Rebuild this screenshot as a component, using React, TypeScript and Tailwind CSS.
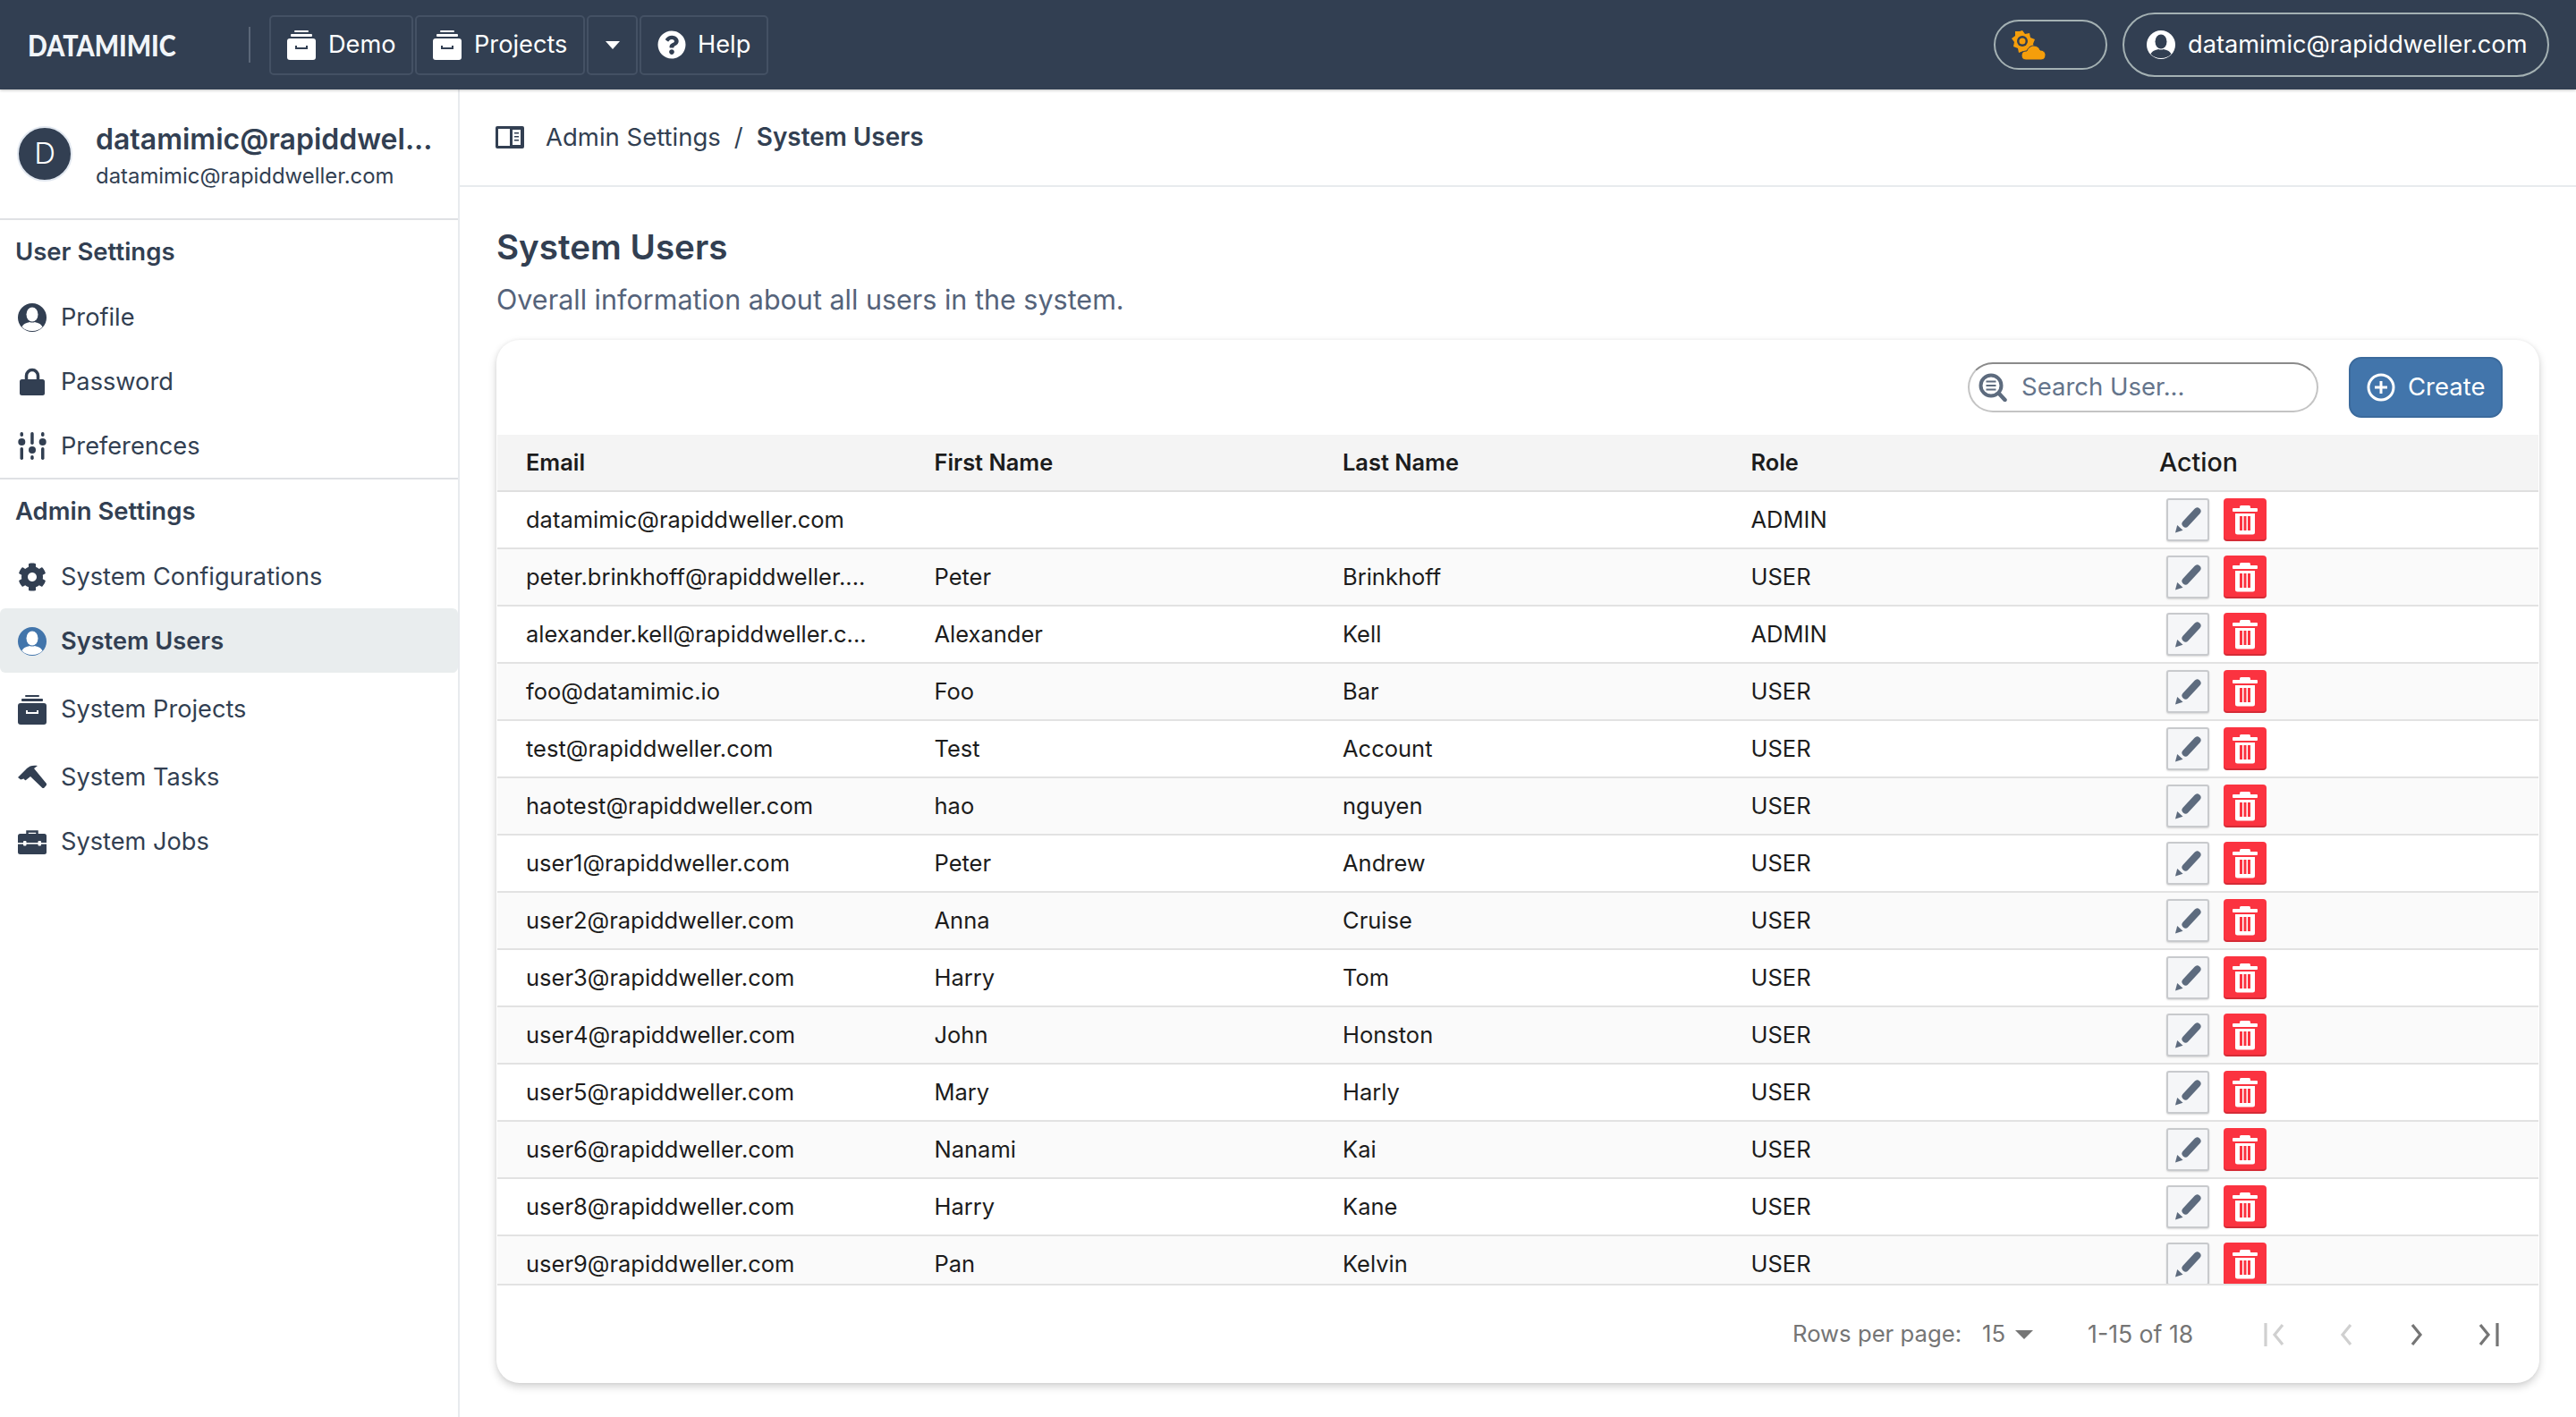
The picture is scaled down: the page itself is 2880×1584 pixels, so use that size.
import { FaCog, FaQuestionCircle } from 'react-icons/fa'

const users = [
  ['datamimic@rapiddweller.com', '', '', 'ADMIN'],
  ['peter.brinkhoff@rapiddweller....', 'Peter', 'Brinkhoff', 'USER'],
  ['alexander.kell@rapiddweller.c...', 'Alexander', 'Kell', 'ADMIN'],
  ['foo@datamimic.io', 'Foo', 'Bar', 'USER'],
  ['test@rapiddweller.com', 'Test', 'Account', 'USER'],
  ['haotest@rapiddweller.com', 'hao', 'nguyen', 'USER'],
  ['user1@rapiddweller.com', 'Peter', 'Andrew', 'USER'],
  ['user2@rapiddweller.com', 'Anna', 'Cruise', 'USER'],
  ['user3@rapiddweller.com', 'Harry', 'Tom', 'USER'],
  ['user4@rapiddweller.com', 'John', 'Honston', 'USER'],
  ['user5@rapiddweller.com', 'Mary', 'Harly', 'USER'],
  ['user6@rapiddweller.com', 'Nanami', 'Kai', 'USER'],
  ['user8@rapiddweller.com', 'Harry', 'Kane', 'USER'],
  ['user9@rapiddweller.com', 'Pan', 'Kelvin', 'USER'],
]

function ArchiveIcon({ cut }: { cut: string }) {
  return (
    <svg viewBox="0 0 32 33" className="w-[32px] h-[33px] shrink-0 fill-current">
      <rect x="8" y="0" width="16" height="2" rx="1" />
      <rect x="4" y="4" width="24" height="3" rx="1" />
      <rect x="0" y="9" width="32" height="24" rx="3" />
      <path d="M10 17v3h12v-3" fill="none" stroke={cut} strokeWidth="2" />
    </svg>
  )
}

function UserIcon({ cut }: { cut: string }) {
  return (
    <svg viewBox="0 0 32 32" className="w-[32px] h-[32px] shrink-0 fill-current">
      <circle cx="16" cy="16" r="16" />
      <ellipse cx="16" cy="12.5" rx="6.5" ry="8" fill={cut} />
      <path d="M4.500 26.500c1-3.500 5.500-4.600 8.500-5.600 1.800.9 4.200.9 6 0 3 1 7.500 2.100 8.500 5.600-2.800 2.900-6.500 4.500-11.500 4.500s-8.700-1.600-11.500-4.500z" fill={cut} />
    </svg>
  )
}

function LockIcon() {
  return (
    <svg viewBox="0 0 32 32" className="w-[32px] h-[32px] shrink-0 fill-current">
      <path d="M9.500 15V9a6.500 6.500 0 0 1 13 0v6" fill="none" stroke="currentColor" strokeWidth="3.500" />
      <rect x="2" y="13" width="28" height="18" rx="2.500" />
    </svg>
  )
}

function SlidersIcon() {
  return (
    <svg viewBox="0 0 32 32" className="w-[32px] h-[32px] shrink-0 fill-current">
      <rect x="2.500" y="0" width="3.500" height="5" rx="1.700" />
      <circle cx="4.300" cy="11" r="4" />
      <rect x="2.500" y="17" width="3.500" height="14" rx="1.700" />
      <rect x="14.200" y="0" width="3.500" height="14" rx="1.700" />
      <circle cx="16" cy="20" r="4" />
      <rect x="14.200" y="26" width="3.500" height="5" rx="1.700" />
      <rect x="26" y="0" width="3.500" height="5" rx="1.700" />
      <circle cx="27.700" cy="11" r="4" />
      <rect x="26" y="17" width="3.500" height="14" rx="1.700" />
    </svg>
  )
}

function HammerIcon() {
  return (
    <svg viewBox="0 0 32 32" className="w-[32px] h-[32px] shrink-0 fill-current">
      <path d="M0 16l10-10c3-3 7-4 12-3l-4 3 14 17c.5.800.2 1.500-.5 2.300l-2 2.200c-.8.800-1.700.8-2.500 0L14 15l-5 4c-.6.300-1 .2-1.400-.2l-1-1.300-3.500 1z" />
    </svg>
  )
}

function BriefcaseIcon() {
  return (
    <svg viewBox="0 0 32 32" className="w-[32px] h-[32px] shrink-0 fill-current">
      <path d="M10.500 8V4.500h11V8" fill="none" stroke="currentColor" strokeWidth="2.500" />
      <rect x="0" y="7" width="32" height="23" rx="2.500" />
      <rect x="0" y="17" width="32" height="1.600" fill="white" />
      <rect x="6" y="15" width="3.500" height="5.500" rx="1" fill="white" />
      <rect x="22.500" y="15" width="3.500" height="5.500" rx="1" fill="white" />
    </svg>
  )
}

function PencilIcon() {
  return (
    <svg viewBox="0 0 48 48" className="w-[48px] h-[48px] shrink-0 fill-[#5d6b7e]">
      <path d="M21.500 28.500L34.500 14.500" stroke="#5d6b7e" strokeWidth="8" strokeLinecap="round" fill="none" />
      <path d="M10 38.500l2.200-8.500 6.300 5.700z" />
    </svg>
  )
}

function TrashIcon() {
  return (
    <svg viewBox="0 0 48 48" className="w-[48px] h-[48px] fill-white">
      <rect x="18" y="8" width="12" height="4" rx="1.500" />
      <rect x="10" y="11" width="28" height="4" rx="1" />
      <path fillRule="evenodd" d="M13 17h22v21a2.500 2.500 0 0 1-2.500 2.500h-17A2.500 2.500 0 0 1 13 38zm5 3v16h3V20zm4.500 0v16h3V20zm4.500 0v16h3V20z" />
    </svg>
  )
}

function WeatherIcon() {
  return (
    <svg viewBox="0 0 40 33" className="w-[40px] h-[33px] fill-[#f59e0b]">
      <path d="M14 0l3 4 5-1 1 5 5 2-2 5 1 3-6 4-3 4-3-3-5 2-1-5-5-2 1-5-3-4 4-3 0-5 5 0z" />
      <circle cx="14" cy="12" r="6" fill="#323f52" />
      <circle cx="14" cy="12" r="3.500" />
      <path d="M18 33c-3 0-5-2-5-5s2-5 5-5h1c1-3 4-6 8-6 3 0 6 2 7 5 3 0 6 2 6 5.500S38 33 35 33z" stroke="#323f52" strokeWidth="1" />
    </svg>
  )
}

function SidebarIcon() {
  return (
    <svg viewBox="0 0 32 25" className="w-[32px] h-[25px] fill-[#323f52]">
      <rect width="32" height="25" rx="2" />
      <rect x="3" y="3" width="13" height="19" fill="white" />
      <rect x="19" y="4" width="9" height="17" fill="white" />
      <rect x="21" y="7" width="5" height="1.500" />
      <rect x="21" y="11" width="5" height="1.500" />
      <rect x="21" y="15" width="5" height="1.500" />
    </svg>
  )
}

function SearchIcon() {
  return (
    <svg viewBox="0 0 32 32" className="w-[32px] h-[32px]" fill="none" stroke="#5d6b7e">
      <circle cx="14" cy="14" r="11.500" strokeWidth="4" />
      <path d="M8.500 9.500h11M8.500 14h11M8.500 18.500h11" strokeWidth="2.200" />
      <path d="M23 23l6.500 7" strokeWidth="4.500" strokeLinecap="round" />
    </svg>
  )
}

function Chevrons({ kind, color }: { kind: string; color: string }) {
  return (
    <svg viewBox="0 0 26 26" className="w-[26px] h-[26px]" fill="none" stroke={color} strokeWidth="3.200">
      {kind === 'first' && <path d="M2 0v26M21 2l-9 11 9 11" />}
      {kind === 'prev' && <path d="M18 2L9 13l9 11" />}
      {kind === 'next' && <path d="M8 2l9 11-9 11" />}
      {kind === 'last' && <path d="M24 0v26M5 2l9 11-9 11" />}
    </svg>
  )
}

function TopButton({ className, children }: { className: string; children: React.ReactNode }) {
  return (
    <div className={`h-[67px] flex items-center border-2 border-[#445164] rounded-[5px] text-[27.2px] text-white ${className}`}>
      {children}
    </div>
  )
}

function NavItem({ icon, label, className = '' }: { icon: React.ReactNode; label: string; className?: string }) {
  return (
    <div className={`h-[72px] flex items-center gap-[16px] pl-[20px] pt-[2px] text-[27.2px] ${className}`}>
      {icon}
      <span>{label}</span>
    </div>
  )
}

export default function App() {
  return (
    <div className="h-screen w-full flex flex-col overflow-hidden bg-white font-[Inter,sans-serif] text-[#323f52]">
      {/* Top bar */}
      <header className="h-[100px] shrink-0 bg-[#323f52] flex items-center pl-[31px] pr-[30px] shadow-[0_1px_3px_rgba(0,0,0,0.25)] z-10">
        <div className="w-[247px] shrink-0 font-[Lato,sans-serif] font-black text-[33px] text-[#f1f5f9] origin-left scale-x-[0.87] leading-none">DATAMIMIC</div>
        <div className="w-[2px] h-[40px] bg-[#5b6778] mr-[21px]" />
        <div className="flex gap-[2px]">
          <TopButton className="w-[161px] pl-[18px] gap-[14px]"><ArchiveIcon cut="#323f52" />Demo</TopButton>
          <TopButton className="w-[190px] pl-[18px] gap-[14px]"><ArchiveIcon cut="#323f52" />Projects</TopButton>
          <TopButton className="w-[57px] justify-center">
            <div className="w-0 h-0 border-x-[8px] border-x-transparent border-t-[9px] border-t-white" />
          </TopButton>
          <TopButton className="w-[144px] pl-[18px] gap-[13px]"><FaQuestionCircle className="w-[32px] h-[32px]" />Help</TopButton>
        </div>
        <div className="ml-auto flex items-center gap-[17px]">
          <div className="w-[127px] h-[56px] border-2 border-[#a4b1b3] rounded-full flex items-center pl-[16px]">
            <WeatherIcon />
          </div>
          <div className="w-[477px] h-[72px] border-2 border-[#a4b1b3] rounded-full flex items-center pl-[25px] gap-[14px] text-[27.2px] text-white">
            <UserIcon cut="#323f52" />
            datamimic@rapiddweller.com
          </div>
        </div>
      </header>

      <div className="flex flex-1 min-h-0">
        {/* Sidebar */}
        <aside className="w-[514px] shrink-0 border-r-2 border-[#e8ebee] flex flex-col">
          <div className="h-[146px] shrink-0 border-b-2 border-[#dfe1e4] flex items-center pl-[19px] gap-[26px]">
            <div className="w-[62px] h-[62px] rounded-full bg-[#323f52] border-2 border-[#e2e8f0] flex items-center justify-center text-white text-[33px] font-light shrink-0">D</div>
            <div className="min-w-0 pt-[5px]">
              <div className="text-[32px] font-semibold leading-[42px]">datamimic@rapiddwel...</div>
              <div className="mt-[2px] text-[23.9px] leading-[36px]">datamimic@rapiddweller.com</div>
            </div>
          </div>
          <div className="h-[36px] mt-[18px] mb-[18px] pl-[17px] flex items-center text-[27.500px] font-semibold">User Settings</div>
          <NavItem icon={<UserIcon cut="white" />} label="Profile" />
          <NavItem icon={<LockIcon />} label="Password" />
          <NavItem icon={<SlidersIcon />} label="Preferences" />
          <div className="border-b-2 border-[#dfe1e4]" />
          <div className="h-[36px] mt-[18px] mb-[18px] pl-[17px] flex items-center text-[27.500px] font-semibold">Admin Settings</div>
          <NavItem icon={<FaCog className="w-[32px] h-[32px]" />} label="System Configurations" />
          <NavItem icon={<span className="text-[#4275ab]"><UserIcon cut="white" /></span>} label="System Users" className="bg-[#e9edee] rounded-[6px] font-semibold" />
          <NavItem icon={<ArchiveIcon cut="white" />} label="System Projects" className="mt-[4px]" />
          <NavItem icon={<HammerIcon />} label="System Tasks" className="mt-[4px]" />
          <NavItem icon={<BriefcaseIcon />} label="System Jobs" />
        </aside>

        {/* Main content */}
        <main className="flex-1 min-w-0 flex flex-col">
          <div className="h-[109px] shrink-0 border-b-2 border-[#e8ebee] flex items-center pl-[40px] text-[27.500px]">
            <SidebarIcon />
            <span className="ml-[24px]">Admin Settings</span>
            <span className="mx-[15px]">/</span>
            <span className="font-semibold text-[27.9px]">System Users</span>
          </div>
          <div className="px-[41px] flex-1 min-h-0 flex flex-col pb-[38px]">
            <h1 className="mt-[42px] text-[38.600px] font-semibold leading-[50px]">System Users</h1>
            <p className="mt-[14px] text-[30.500px] leading-[40px] text-[#55637a]">Overall information about all users in the system.</p>
            <div className="mt-[25px] flex-1 min-h-0 flex flex-col rounded-[26px] bg-white shadow-[0_4px_10px_rgba(0,0,0,0.18),0_0_4px_rgba(0,0,0,0.05)] px-[1px] overflow-hidden">
              <div className="h-[106px] shrink-0 flex items-center justify-end pr-[40px] gap-[34px]">
                <div className="w-[392px] h-[56px] rounded-full border-2 border-[#c4c4c4] border-t-[#8a8a8a] flex items-center pl-[10px] gap-[16px] text-[27.500px] text-[#64748b]">
                  <SearchIcon />
                  Search User...
                </div>
                <div className="w-[172px] h-[68px] rounded-[14px] bg-[#4275ab] border-2 border-[#3b6a9c] flex items-center pl-[18px] gap-[14px] text-[27.500px] text-white">
                  <svg viewBox="0 0 32 32" className="w-[32px] h-[32px]" fill="none" stroke="white" strokeWidth="3">
                    <circle cx="16" cy="16" r="14" />
                    <path d="M16 9v14M9 16h14" />
                  </svg>
                  Create
                </div>
              </div>
              <div className="h-[64px] shrink-0 bg-[#f4f4f4] border-b-2 border-[#dfdfdf] grid grid-cols-[456.500px_456.500px_456.500px_456.500px_1fr] pl-[32px] items-center text-[#1c1c1c] text-[25.400px] font-semibold">
                <div>Email</div>
                <div>First Name</div>
                <div>Last Name</div>
                <div>Role</div>
                <div className="text-[28.600px] font-medium">Action</div>
              </div>
              <div className="flex-1 min-h-0 overflow-hidden">
                {users.map((u, i) => (
                  <div key={u[0]} className={`h-[64px] border-b-2 border-[#e2e2e2] grid grid-cols-[456.500px_456.500px_456.500px_456.500px_1fr] pl-[32px] items-center text-[25.500px] text-[#1c1c1c] ${i % 2 === 1 ? 'bg-[#fafafa]' : 'bg-white'}`}>
                    <div>{u[0]}</div>
                    <div>{u[1]}</div>
                    <div>{u[2]}</div>
                    <div>{u[3]}</div>
                    <div className="flex gap-[16px] pl-[8px]">
                      <div className="w-[48px] h-[48px] rounded-[3px] bg-[#f5f6f8] border-2 border-[#c8cacd] shadow-[0_1px_2px_rgba(0,0,0,0.15)] flex items-center justify-center">
                        <PencilIcon />
                      </div>
                      <div className="w-[48px] h-[48px] rounded-[4px] bg-[#fb3340] shadow-[inset_0_-2px_0_rgba(0,0,0,0.15)]">
                        <TrashIcon />
                      </div>
                    </div>
                  </div>
                ))}
              </div>
              <div className="h-[111px] shrink-0 border-t-2 border-[#e2e2e2] flex items-center pl-[1448px] text-[25.700px] text-[#757575]">
                <span>Rows per page:</span>
                <span className="ml-[23px]">15</span>
                <div className="ml-[11px] w-0 h-0 border-x-[10px] border-x-transparent border-t-[10px] border-t-[#757575]" />
                <span className="ml-[61px] text-[26.6px]">1-15 of 18</span>
                <div className="ml-[79px] flex gap-[53px]">
                  <Chevrons kind="first" color="#d0d0d0" />
                  <Chevrons kind="prev" color="#d0d0d0" />
                  <Chevrons kind="next" color="#757575" />
                  <Chevrons kind="last" color="#757575" />
                </div>
              </div>
            </div>
          </div>
        </main>
      </div>
    </div>
  )
}
